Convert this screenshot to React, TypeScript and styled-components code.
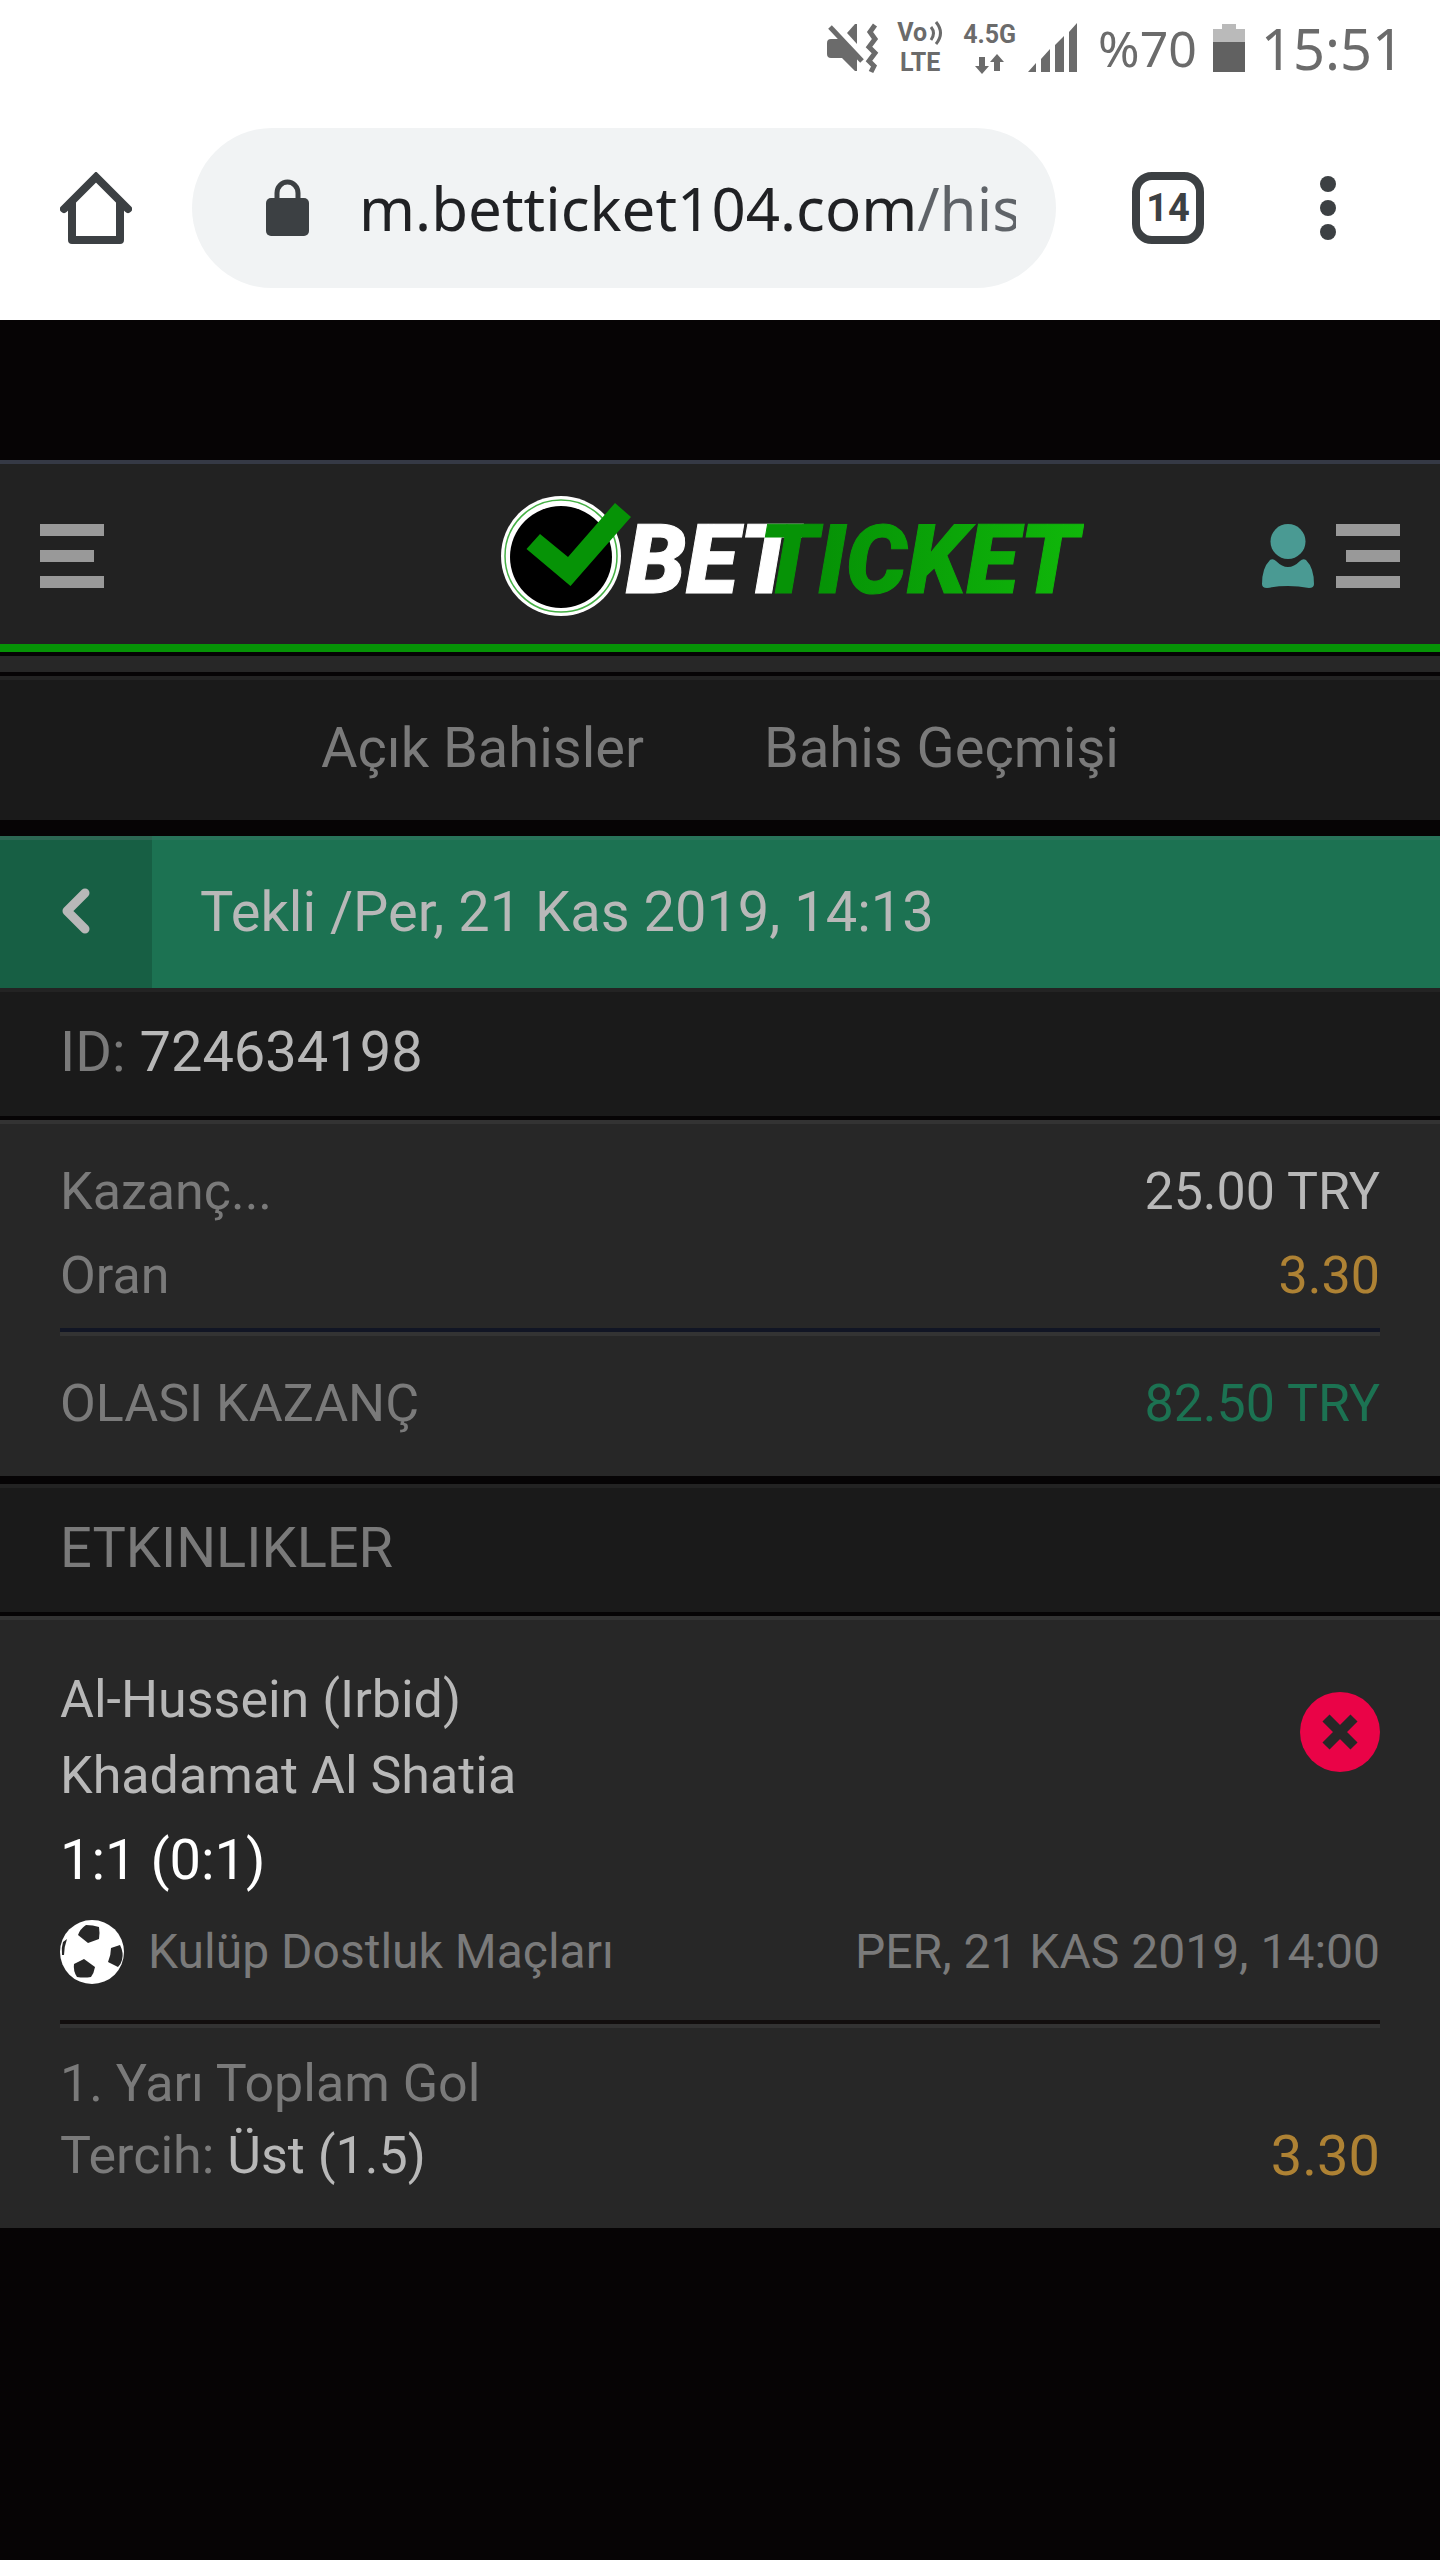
import React from "react";
import styled, { createGlobalStyle } from "styled-components";

const color = {
  page: "#060405",
  header: "#222222",
  bar: "#1a1a1a",
  barEdge: "#232323",
  card: "#272727",
  cardEdge: "#333333",
  label: "#7a7a7a",
  value: "#b8b8b8",
  odds: "#ae8234",
  win: "#1c7252",
  ink: "#3c4043",
  status: "#6b6b6b",
};

const GlobalStyle = createGlobalStyle`
  *, *::before, *::after { box-sizing: border-box; }
  body { margin: 0; background: ${color.page}; font-family: Roboto, "Liberation Sans", sans-serif; }
  h1, h2, p, dl, dd, dt { margin: 0; font-weight: 400; }
  button { margin: 0; padding: 0; border: 0; background: none; font: inherit; color: inherit; cursor: pointer; }
  a { color: inherit; text-decoration: none; }
  svg { display: block; flex: none; }
`;

/* Phone status bar */

const StatusBar = styled.div`
  display: flex;
  align-items: center;
  justify-content: flex-end;
  height: 96px;
  padding: 0 36px;
  background: #fff;
  color: ${color.status};
  font-family: "Noto Sans", sans-serif;
`;

const NetworkStack = styled.div<{ $gap: number }>`
  display: flex;
  flex-direction: column;
  align-items: center;
  margin-left: ${(p) => p.$gap}px;
  font-family: Roboto, sans-serif;
  font-size: 25px;
  font-weight: 700;
  line-height: 30px;
`;

const VoiceLine = styled.span`
  display: flex;
  align-items: center;
  gap: 2px;
`;

const SignalIcon = styled.svg`
  margin-left: 12px;
`;

const BatteryLevel = styled.span`
  margin-left: 20px;
  font-size: 50px;
  line-height: 64px;
`;

const BatteryIcon = styled.svg`
  margin: 0 16px 0 16px;
`;

const Clock = styled.time`
  font-size: 56px;
  line-height: 64px;
`;

/* Browser toolbar */

const Toolbar = styled.div`
  display: flex;
  align-items: center;
  height: 224px;
  padding: 0 76px 0 60px;
  background: #fff;
  color: ${color.ink};
`;

const AddressBar = styled.label`
  display: flex;
  flex: 1;
  align-items: center;
  min-width: 0;
  height: 160px;
  margin: 0 76px 0 60px;
  padding: 0 40px 0 74px;
  border-radius: 80px;
  background: #f1f3f4;
`;

const AddressInput = styled.input`
  flex: 1;
  min-width: 0;
  height: 88px;
  margin: 0 0 0 50px;
  padding: 0;
  border: 0;
  outline: 0;
  font-family: "Noto Sans", sans-serif;
  font-size: 60px;
  background: linear-gradient(90deg, #202124 556px, #5f6368 556px);
  background-clip: text;
  -webkit-background-clip: text;
  -webkit-text-fill-color: transparent;
  color: #202124;
`;

const TabsButton = styled.button`
  width: 72px;
  height: 72px;
  margin-right: 88px;
  border: 8px solid ${color.ink};
  border-radius: 20px;
  font-size: 38px;
  font-weight: 700;
  line-height: 56px;
`;

/* Site header */

const SiteHeader = styled.header`
  display: grid;
  grid-template-columns: 1fr auto 1fr;
  align-items: center;
  height: 192px;
  margin-top: 140px;
  padding: 4px 40px 0;
  border-top: 4px solid #353945;
  border-bottom: 8px solid #069306;
  background: ${color.header};
`;

const LogoLink = styled.a`
  padding-left: 144px;
`;

const AccountTools = styled.div`
  display: flex;
  justify-content: flex-end;
  gap: 22px;
`;

const Divider = styled.div`
  height: 24px;
  border-top: 4px solid ${color.page};
  border-bottom: 4px solid ${color.page};
  background: ${color.card};
`;

/* Bet history */

const Tabs = styled.nav`
  display: flex;
  align-items: center;
  justify-content: center;
  gap: 120px;
  height: 144px;
  margin-bottom: 16px;
  padding-bottom: 4px;
  border-top: 4px solid ${color.barEdge};
  background: ${color.bar};
  color: ${color.label};
  font-size: 56px;
  line-height: 64px;
`;

const TitleBar = styled.div`
  display: flex;
  height: 152px;
  background: ${color.win};
  box-shadow: inset 0 4px #28735a;
`;

const BackButton = styled.button`
  display: flex;
  align-items: center;
  justify-content: center;
  width: 152px;
  background: #175f44;
  box-shadow: inset 0 4px #2c6753;
`;

const Title = styled.h1`
  padding-left: 48px;
  color: ${color.value};
  font-size: 56px;
  line-height: 152px;
`;

const SectionBar = styled.div`
  height: 128px;
  padding: 0 60px;
  border-top: 4px solid ${color.barEdge};
  background: ${color.bar};
  color: ${color.label};
  font-size: 56px;
  line-height: 120px;
`;

const SectionTitle = styled.h2`
  font-size: 56px;
`;

const Value = styled.span`
  color: ${color.value};
`;

const Card = styled.section<{ $pad: string; $gapBelow?: number }>`
  margin-top: 4px;
  margin-bottom: ${(p) => p.$gapBelow ?? 0}px;
  padding: ${(p) => p.$pad};
  border-top: 4px solid ${color.cardEdge};
  background: ${color.card};
  color: ${color.label};
  font-size: 52px;
`;

const Row = styled.div`
  display: flex;
  align-items: center;
  justify-content: space-between;
  line-height: 84px;
`;

const Amount = styled.dd<{ $tone: string }>`
  color: ${(p) => p.$tone};
`;

const Rule = styled.hr<{ $tone: string; $space: string }>`
  height: 8px;
  margin: ${(p) => p.$space};
  border: 0;
  border-top: 4px solid ${(p) => p.$tone};
  background: ${color.cardEdge};
`;

const Match = styled.div`
  display: flex;
  align-items: flex-start;
  justify-content: space-between;
`;

const Team = styled.p`
  color: ${color.value};
  line-height: 76px;
`;

const LostIcon = styled.svg`
  margin-top: 30px;
`;

const Score = styled.p`
  color: #fff;
  font-size: 56px;
  line-height: 92px;
`;

const League = styled.div`
  display: flex;
  align-items: center;
  justify-content: space-between;
  font-size: 48px;
  line-height: 92px;
`;

const LeagueName = styled.span`
  display: flex;
  align-items: center;
  gap: 24px;
`;

const Pick = styled.div`
  display: flex;
  justify-content: space-between;
  line-height: 72px;
`;

const Odds = styled.span`
  color: ${color.odds};
  font-size: 56px;
`;

function MenuIcon({ flipped = false }: { flipped?: boolean }) {
  return (
    <svg width="64" height="64" viewBox="0 0 64 64" fill="#999999" aria-hidden="true">
      <path d="M0 0h64v12H0zM0 52h64v12H0z" />
      <path d={flipped ? "M10 26h54v12H10z" : "M0 26h54v12H0z"} />
    </svg>
  );
}

function Logo() {
  return (
    <svg width="584" height="120" viewBox="0 0 584 120" role="img" aria-label="Betticket">
      <defs>
        <linearGradient id="ticket" gradientUnits="userSpaceOnUse" x1="260" y1="0" x2="584" y2="0">
          <stop offset="0.2" stopColor="#069306" />
          <stop offset="1" stopColor="#10b80a" />
        </linearGradient>
      </defs>
      <circle cx="61" cy="60" r="60" fill="#fff" />
      <circle cx="61" cy="60" r="56" fill="none" stroke="#45b045" strokeWidth="1.5" />
      <circle cx="61" cy="61" r="51" fill="#000" />
      <path d="M26.500 53 L40 38 L68 61 L115 7 L131 21 L70.500 90 Z" fill="#069306" />
      <g fontFamily="Roboto, sans-serif" fontSize="96" fontWeight="900" fontStyle="italic" strokeWidth="1">
        <text x="126" y="97" fill="#fff" stroke="#fff">BET</text>
        <text x="259" y="97" fill="url(#ticket)" stroke="url(#ticket)">TICKET</text>
      </g>
    </svg>
  );
}

export default function App() {
  return (
    <>
      <GlobalStyle />
      <StatusBar>
        <svg width="52" height="52" viewBox="0 0 52 52" fill="none" aria-hidden="true">
          <path d="M4 17h11l15 19v13h-2L15 36H4q-4 0-4-4V21q0-4 4-4z" fill={color.status} />
          <path d="M20 11l8-9h2v20z" fill={color.status} />
          <path d="M3 5l32 34" stroke={color.status} strokeWidth="5" />
          <path d="M48 3l-5 7 5 7-6 8 6 6-6 8 5 5-3 6" stroke={color.status} strokeWidth="5" />
        </svg>
        <NetworkStack $gap={18}>
          <VoiceLine>
            Vo
            <svg width="14" height="24" viewBox="0 0 14 24" fill="none" stroke={color.status} strokeWidth="3" aria-hidden="true">
              <path d="M2 6q5 6 0 13M7 1q9 11 0 22" />
            </svg>
          </VoiceLine>
          <span>LTE</span>
        </NetworkStack>
        <NetworkStack $gap={20}>
          <span>4.5G</span>
          <svg width="30" height="26" viewBox="0 0 30 26" fill={color.status} aria-hidden="true">
            <path d="M4 7h6v9h4l-7 8-7-8h4zM19 21h6v-9h4l-7-8-7 8h4z" />
          </svg>
        </NetworkStack>
        <SignalIcon width="50" height="50" viewBox="0 0 50 50" fill={color.status} aria-hidden="true">
          <path d="M0 49l8-9v9zM13 36l9-10v23h-9zM27 22l9-9v36h-9zM41 9l8-9v49h-8z" />
        </SignalIcon>
        <BatteryLevel>%70</BatteryLevel>
        <BatteryIcon width="32" height="48" viewBox="0 0 32 48" aria-hidden="true">
          <path d="M9 0h14v5h9v15H0V5h9z" fill="#bababa" />
          <path d="M0 18h32v30H0z" fill="#616161" />
        </BatteryIcon>
        <Clock>15:51</Clock>
      </StatusBar>

      <Toolbar>
        <button aria-label="Ana sayfa">
          <svg width="72" height="72" viewBox="0 0 72 72" fill="none" stroke={color.ink} strokeWidth="8" aria-hidden="true">
            <path d="M4 37L36 5l32 32" strokeLinecap="round" />
            <path d="M12 30v38h48V30" strokeLinejoin="round" />
          </svg>
        </button>
        <AddressBar>
          <svg width="43" height="58" viewBox="0 0 43 58" fill="none" aria-hidden="true">
            <rect y="19" width="43" height="38" rx="5" fill={color.ink} />
            <path d="M11 21V14a10.500 11 0 0 1 21 0v7" stroke={color.ink} strokeWidth="5" />
          </svg>
          <AddressInput aria-label="Adres" defaultValue="m.betticket104.com/his" />
        </AddressBar>
        <TabsButton aria-label="Sekmeler: 14">14</TabsButton>
        <button aria-label="Diğer seçenekler">
          <svg width="72" height="72" viewBox="0 0 72 72" fill={color.ink} aria-hidden="true">
            <circle cx="36" cy="12" r="8" />
            <circle cx="36" cy="36" r="8" />
            <circle cx="36" cy="60" r="8" />
          </svg>
        </button>
      </Toolbar>

      <SiteHeader>
        <button aria-label="Menü">
          <MenuIcon />
        </button>
        <LogoLink href="#">
          <Logo />
        </LogoLink>
        <AccountTools>
          <button aria-label="Hesap">
            <svg width="52" height="64" viewBox="0 0 52 64" fill="#4a9a93" aria-hidden="true">
              <circle cx="26" cy="17.500" r="17.500" />
              <path d="M8 36q3-2 6 1 12 12 24 0 3-3 6-1 8 8 8 24 0 4-5 4-21-4-42 0-5 0-5-4 0-16 8-24z" />
            </svg>
          </button>
          <button aria-label="Hesap menüsü">
            <MenuIcon flipped />
          </button>
        </AccountTools>
      </SiteHeader>

      <main>
        <Divider />
        <Tabs>
          <a href="#acik">Açık Bahisler</a>
          <a href="#gecmis">Bahis Geçmişi</a>
        </Tabs>

        <TitleBar>
          <BackButton aria-label="Geri">
            <svg width="32" height="48" viewBox="0 0 32 48" fill="none" stroke={color.value} strokeWidth="9" strokeLinecap="round" strokeLinejoin="round" aria-hidden="true">
              <path d="M25 5L7 23l18 18" />
            </svg>
          </BackButton>
          <Title>Tekli /Per, 21 Kas 2019, 14:13</Title>
        </TitleBar>

        <SectionBar>
          ID: <Value>724634198</Value>
        </SectionBar>

        <Card as="dl" $pad="26px 60px 30px" $gapBelow={8}>
          <Row>
            <dt>Kazanç...</dt>
            <Amount $tone={color.value}>25.00 TRY</Amount>
          </Row>
          <Row>
            <dt>Oran</dt>
            <Amount $tone={color.odds}>3.30</Amount>
          </Row>
          <Rule $tone="#111524" $space="10px 0 26px" />
          <Row>
            <dt>OLASI KAZANÇ</dt>
            <Amount $tone={color.win}>82.50 TRY</Amount>
          </Row>
        </Card>

        <SectionBar>
          <SectionTitle>ETKINLIKLER</SectionTitle>
        </SectionBar>

        <Card $pad="42px 60px 36px">
          <Match>
            <div>
              <Team>Al-Hussein (Irbid)</Team>
              <Team>Khadamat Al Shatia</Team>
            </div>
            <LostIcon width="80" height="80" viewBox="0 0 80 80" role="img" aria-label="Kaybetti">
              <circle cx="40" cy="40" r="40" fill="#ea0347" />
              <path d="M26 26l28 28M54 26L26 54" stroke="#272727" strokeWidth="10" />
            </LostIcon>
          </Match>
          <Score>1:1 (0:1)</Score>
          <League>
            <LeagueName>
              <svg width="64" height="64" viewBox="0 0 64 64" fill={color.card} aria-hidden="true">
                <circle cx="32" cy="32" r="32" fill="#fff" />
                <path d="M26 5q7 0 13 2 1 6 0 12l-11 4-10-8q2-6 8-10z" />
                <path d="M24 39l11 8q-1 6-4 10-7 1-14 0-4-6-3-13z" />
                <path d="M51 28l9-3q4 8 2 15-1 4-4 7l-10-5q3-7 3-14z" />
                <path d="M3 22l4-3q-3 8-3 16H2q-1-7 1-13z" />
              </svg>
              Kulüp Dostluk Maçları
            </LeagueName>
            <time>PER, 21 KAS 2019, 14:00</time>
          </League>
          <Rule $tone="#120e0e" $space="22px 0 20px" />
          <Pick>
            <span>1. Yarı Toplam Gol</span>
          </Pick>
          <Pick>
            <span>
              Tercih: <Value>Üst (1.5)</Value>
            </span>
            <Odds>3.30</Odds>
          </Pick>
        </Card>
      </main>
    </>
  );
}
